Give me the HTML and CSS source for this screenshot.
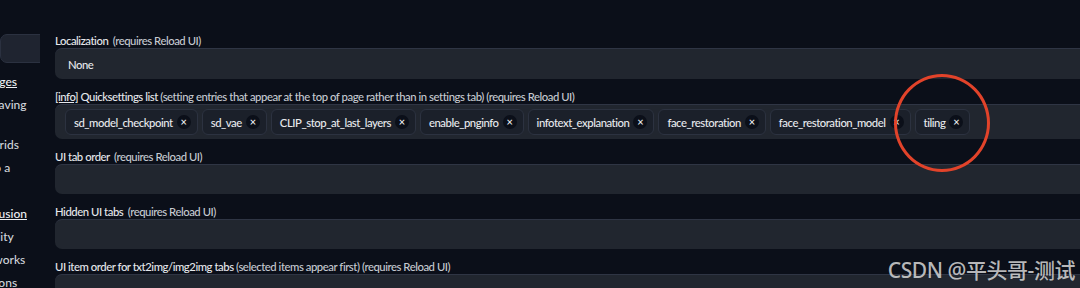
FILE: index.html
```html
<!DOCTYPE html>
<html lang="en">
<head>
    <meta charset="UTF-8">
    <title>Settings</title>
    <link rel="stylesheet" href="styles.css">
</head>
<body>
    <div class="settings">
        <!-- Sidebar -->
        <nav class="sidebar">
            <div class="nav-inner">
                <div class="nav-selected">Search</div>
                <a class="nav-header">Saving images</a>
                <a class="nav-item">Paths for saving</a>
                <a class="nav-item nav-tight">Upscaling</a>
                <a class="nav-item nav-tight">Paths for grids</a>
                <a class="nav-item">Saving into a</a>
                <a class="nav-item">directory</a>
                <a class="nav-header">Stable Diffusion</a>
                <a class="nav-item">Compatibility</a>
                <a class="nav-item">Extra Networks</a>
                <a class="nav-item">Optimizations</a>
            </div>
        </nav>

        <!-- Settings -->
        <main class="content">
            <div class="field">
                <label class="field-label">Localization <span class="hint">(requires Reload UI)</span></label>
                <div class="box box-select">None</div>
            </div>
            <div class="field">
                <label class="field-label"><a class="info">[info]</a> Quicksettings list <span class="hint-plain">(setting entries that appear at the top of page rather than in settings tab) (requires Reload UI)</span></label>
                <div class="box box-chips">
                    <span class="chip"><span>sd_model_checkpoint</span><span class="chip-x">&times;</span></span>
                    <span class="chip"><span>sd_vae</span><span class="chip-x">&times;</span></span>
                    <span class="chip"><span>CLIP_stop_at_last_layers</span><span class="chip-x">&times;</span></span>
                    <span class="chip"><span>enable_pnginfo</span><span class="chip-x">&times;</span></span>
                    <span class="chip"><span>infotext_explanation</span><span class="chip-x">&times;</span></span>
                    <span class="chip"><span>face_restoration</span><span class="chip-x">&times;</span></span>
                    <span class="chip"><span>face_restoration_model</span><span class="chip-x">&times;</span></span>
                    <span class="chip chip-marked"><span>tiling</span><span class="chip-x">&times;</span></span>
                </div>
            </div>
            <div class="field">
                <label class="field-label">UI tab order <span class="hint">(requires Reload UI)</span></label>
                <div class="box"></div>
            </div>
            <div class="field">
                <label class="field-label">Hidden UI tabs <span class="hint">(requires Reload UI)</span></label>
                <div class="box"></div>
            </div>
            <div class="field">
                <label class="field-label">UI item order for txt2img/img2img tabs <span class="hint-plain">(selected items appear first) (requires Reload UI)</span></label>
                <div class="box"></div>
            </div>
        </main>
    </div>

    <div class="watermark">CSDN @平头哥-测试</div>
</body>
</html>
```

FILE: styles.css
```css
/* General Styles */
* {
    margin: 0;
    padding: 0;
    box-sizing: border-box;
}

body {
    background-color: #0b0f19;
    color: #d1d5db;
    font-family: Lato, "Noto Sans", sans-serif;
    font-size: 11.3px;
    font-weight: 500;
    letter-spacing: -0.45px;
    width: 1080px;
    height: 288px;
    overflow: hidden;
    position: relative;
}

.settings {
    display: grid;
    grid-template-columns: 40px 1fr;
    column-gap: 15px;
    margin-right: -12px;
}

/* Sidebar */
.sidebar {
    overflow: hidden;
    padding-top: 34px;
}

.nav-inner {
    display: flex;
    flex-direction: column;
    margin-left: -57px;
    width: 120px;
}

.nav-selected {
    height: 29px;
    margin-left: 57px;
    margin-bottom: 7px;
    background: #1f2430;
    border: 1px solid #2b3140;
    border-radius: 7px;
    color: transparent;
}

.nav-header,
.nav-item {
    white-space: nowrap;
    font-size: 12px;
    letter-spacing: 0;
    line-height: 23px;
    color: #d1d5db;
}

.nav-header {
    text-decoration: underline;
    color: #eef0f3;
}

.nav-tight {
    margin-top: -3px;
}

/* Settings fields */
.content {
    display: flex;
    flex-direction: column;
    gap: 11px;
    padding-top: 34px;
}

.field-label {
    display: block;
    line-height: 14px;
    color: #e6e8ec;
    white-space: nowrap;
}

.hint {
    margin-left: 2px;
    color: #c6cad1;
}

.hint-plain {
    color: #c6cad1;
}

.info {
    text-decoration: underline;
}

.box {
    height: 30px;
    background: #21262f;
    border-top: 1px solid #2f3544;
    border-radius: 7px;
}

.box-select {
    height: 31px;
    display: flex;
    align-items: center;
    padding-left: 13px;
    color: #e5e7eb;
}

.box-chips {
    height: 35px;
    display: flex;
    align-items: center;
    gap: 4px;
    padding-left: 10px;
}

.chip {
    display: flex;
    align-items: center;
    gap: 4px;
    height: 26px;
    padding: 0 6px 0 8px;
    background: #1b202a;
    border: 1px solid #2c3240;
    border-radius: 6px;
    color: #e8eaee;
    white-space: nowrap;
}

.chip-marked {
    position: relative;
}

.chip-marked::after {
    content: "";
    position: absolute;
    left: -22px;
    top: -36px;
    width: 90px;
    height: 92px;
    border: 3px solid #e2432a;
    border-radius: 50%;
}

.chip-x {
    width: 14px;
    height: 14px;
    border-radius: 50%;
    background: #0b0f19;
    color: #f3f4f6;
    font-size: 11px;
    letter-spacing: 0;
    line-height: 14px;
    text-align: center;
}

/* Watermark */
.watermark {
    position: absolute;
    right: 5px;
    bottom: 5px;
    font-family: "Noto Sans", "Noto Sans CJK SC", sans-serif;
    font-size: 21px;
    line-height: 26px;
    color: rgba(215, 215, 215, 0.85);
}
```
